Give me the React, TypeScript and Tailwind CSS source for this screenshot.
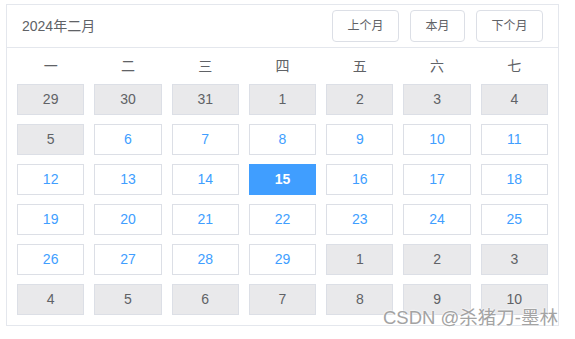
const weekdays = ["一", "二", "三", "四", "五", "六", "七"];

type Day = { n: number; current: boolean };

// 截图里前 8 格（29 到 5）都是灰色
const days: Day[] = [
  ...[29, 30, 31, 1, 2, 3, 4, 5].map((n) => ({ n, current: false })),
  ...Array.from({ length: 24 }, (_, i) => ({ n: i + 6, current: true })),
  ...Array.from({ length: 10 }, (_, i) => ({ n: i + 1, current: false })),
];

const today = 15;

export default function App() {
  return (
    <div
      className="relative h-[339px] w-[575px] bg-white"
      style={{ fontFamily: '"Liberation Sans", "Noto Sans CJK SC", sans-serif' }}
    >
      <div className="absolute left-[6px] top-[4px] w-[553px] border border-[#e4e7ed] bg-white">
        {/* 头部 */}
        <div className="flex h-[43px] items-center justify-between border-b border-[#e4e7ed] pl-[15px] pr-[15px]">
          <span className="text-[14px] text-[#606266]">2024年二月</span>
          <div className="flex gap-[11px]">
            <button className="h-[32px] w-[67px] rounded-[4px] border border-[#dcdfe6] text-[12px] text-[#606266]">
              上个月
            </button>
            <button className="h-[32px] w-[55px] rounded-[4px] border border-[#dcdfe6] text-[12px] text-[#606266]">
              本月
            </button>
            <button className="h-[32px] w-[67px] rounded-[4px] border border-[#dcdfe6] text-[12px] text-[#606266]">
              下个月
            </button>
          </div>
        </div>

        {/* 星期 */}
        <div className="grid grid-cols-7 gap-x-[10px] px-[10px]">
          {weekdays.map((w) => (
            <div key={w} className="flex h-[36px] items-center justify-center text-[14px] text-[#606266]">
              {w}
            </div>
          ))}
        </div>

        {/* 日期 */}
        <div className="grid grid-cols-7 gap-x-[10px] gap-y-[9px] px-[10px] pb-[10px]">
          {days.map((d, i) => {
            const isToday = d.current && d.n === today;
            return (
              <div
                key={i}
                className={
                  isToday
                    ? "flex h-[31px] items-center justify-center border border-[#409eff] bg-[#409eff] text-[14px] font-bold text-white"
                    : d.current
                      ? "flex h-[31px] items-center justify-center border border-[#dcdfe6] bg-white text-[14px] text-[#409eff]"
                      : "flex h-[31px] items-center justify-center border border-[#dcdfe6] bg-[#e9e9eb] text-[14px] text-[#606266]"
                }
              >
                {d.n}
              </div>
            );
          })}
        </div>
      </div>

      {/* 水印 */}
      <div
        className="absolute left-[383px] top-[306px] text-[18.5px] leading-[24px] text-[#a3a3a3]"
        style={{ textShadow: "0 0 2px #fff, 0 0 2px #fff" }}
      >
        CSDN @杀猪刀-墨林
      </div>
    </div>
  );
}
